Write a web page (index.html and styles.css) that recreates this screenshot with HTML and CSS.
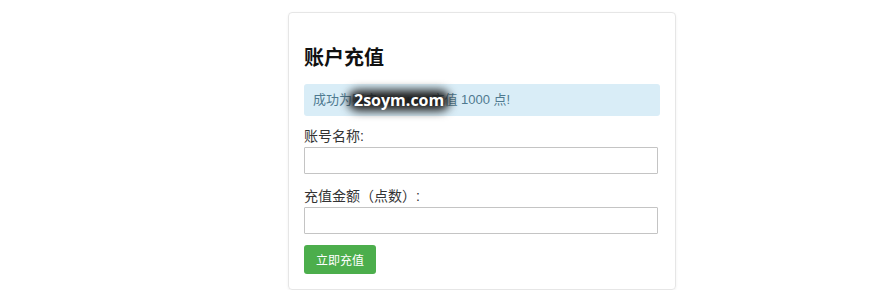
FILE: index.html
```html
<!DOCTYPE html>
<html lang="zh-CN">
<head>
    <meta charset="UTF-8">
    <meta name="viewport" content="width=device-width, initial-scale=1.0">
    <title>账户充值</title>
    <link rel="stylesheet" href="styles.css">
</head>
<body>
    <div class="card">
        <h2 class="card-title">账户充值</h2>
        <div class="alert">
            成功为账户 testuser 充值 1000 点!
            <span class="watermark">2soym.com</span>
        </div>
        <form class="recharge-form">
            <label for="account">账号名称:</label>
            <input type="text" id="account">
            <label for="amount">充值金额（点数）:</label>
            <input type="text" id="amount">
            <button type="button" class="btn">立即充值</button>
        </form>
    </div>
</body>
</html>
```

FILE: styles.css
```css
/* General styles */
body {
    font-family: "Liberation Sans", "Noto Sans CJK SC", sans-serif;
    margin: 0;
    padding: 0;
    background-color: #fff;
    color: #333;
}

.card {
    width: 356px;
    margin: 12px 0 0 288px;
    padding: 33px 15px 15px;
    border: 1px solid #e6e6e6;
    border-radius: 4px;
    box-shadow: 0 1px 3px rgba(0, 0, 0, 0.06);
}

.card-title {
    margin: 0 0 14px;
    font-size: 20px;
    line-height: 24px;
    font-weight: bold;
    color: #111;
}

.alert {
    position: relative;
    padding: 8px 9px;
    font-size: 13px;
    line-height: 16px;
    color: #4f7a90;
    background-color: #d9edf7;
    border-radius: 3px;
}

/* image watermark sitting over the message */
.watermark {
    position: absolute;
    z-index: 1;
    left: 46px;
    top: 5px;
    padding: 0 4px;
    font-family: "Open Sans", "DejaVu Sans", sans-serif;
    font-size: 16px;
    line-height: 22px;
    font-weight: bold;
    color: #fff;
}

.watermark::before {
    content: "";
    position: absolute;
    inset: 1px -2px 0;
    z-index: -1;
    background-color: #1e1e1e;
    border-radius: 10px;
    filter: blur(5px);
}

.recharge-form {
    display: flex;
    flex-direction: column;
    align-items: flex-start;
    margin-top: 10px;
}

.recharge-form label {
    font-size: 14px;
    line-height: 20px;
    color: #333;
    margin-bottom: 1px;
}

.recharge-form input {
    box-sizing: border-box;
    width: 354px;
    height: 27px;
    margin: 0 0 12px;
    border: 1px solid #c4c4c4;
    border-radius: 1px;
    font-size: 14px;
}

.recharge-form input:last-of-type {
    margin-bottom: 11px;
}

.btn {
    width: 72px;
    height: 29px;
    border: none;
    border-radius: 3px;
    background-color: #4cae4c;
    color: #fff;
    font-family: "Noto Sans CJK SC", sans-serif;
    font-size: 12px;
    cursor: pointer;
}
```
